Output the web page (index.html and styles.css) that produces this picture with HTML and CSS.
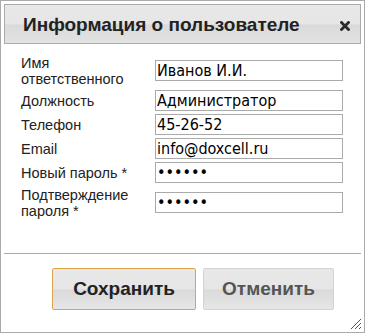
FILE: index.html
```html
<!DOCTYPE html>
<html lang="ru">
<head>
    <meta charset="UTF-8">
    <title>Информация о пользователе</title>
    <link rel="stylesheet" href="styles.css">
</head>
<body>
    <div class="dialog">
        <div class="dialog-titlebar">
            <span class="dialog-title">Информация о пользователе</span>
            <svg class="dialog-close" width="10" height="10" viewBox="0 0 10 10">
                <path d="M1.5 1.5 L8.5 8.5 M8.5 1.5 L1.5 8.5" stroke="#2b2b2b" stroke-width="2.8" stroke-linecap="square"/>
            </svg>
        </div>

        <div class="dialog-content">
            <form class="user-form">
                <label class="field-label" for="fio">Имя ответственного</label>
                <input class="field-input" id="fio" type="text" value="Иванов И.И.">

                <label class="field-label" for="post">Должность</label>
                <input class="field-input" id="post" type="text" value="Администратор">

                <label class="field-label" for="phone">Телефон</label>
                <input class="field-input" id="phone" type="text" value="45-26-52">

                <label class="field-label" for="email">Email</label>
                <input class="field-input" id="email" type="text" value="info@doxcell.ru">

                <label class="field-label" for="pass">Новый пароль *</label>
                <input class="field-input" id="pass" type="password" value="123456">

                <label class="field-label" for="pass2">Подтверждение пароля *</label>
                <input class="field-input" id="pass2" type="password" value="123456">
            </form>
        </div>

        <div class="dialog-buttonpane">
            <button class="dialog-button dialog-button-primary" type="button">Сохранить</button>
            <button class="dialog-button" type="button">Отменить</button>
        </div>

        <svg class="resize-handle" width="12" height="12" viewBox="0 0 12 12">
            <path d="M11 1 L1 11 M11 5 L5 11 M11 9 L9 11" stroke="#555" stroke-width="1"/>
        </svg>
    </div>
</body>
</html>
```

FILE: styles.css
```css
* {
    margin: 0;
    padding: 0;
    box-sizing: border-box;
}

body {
    background: #fff;
    font-family: 'Liberation Sans', Arial, sans-serif;
}

.dialog {
    position: relative;
    width: 365px;
    height: 333px;
    border: 1px solid #aaa;
    padding: 3px;
    display: flex;
    flex-direction: column;
    background: #fff;
}

.dialog-titlebar {
    height: 40px;
    border: 1px solid #aaa;
    background: linear-gradient(#e8e8e8 0%, #e6e6e6 50%, #dadada 52%, #e3e3e3 100%);
    display: flex;
    align-items: center;
    justify-content: space-between;
    padding: 0 11px 0 18px;
}

.dialog-title {
    font-size: 19px;
    font-weight: bold;
    color: #222;
    line-height: 38px;
    padding-top: 1px;
}

.dialog-close {
    display: block;
    margin-top: 4px;
    margin-right: -1px;
}

.dialog-content {
    flex: 1;
    padding: 10px 19px 0 17px;
}

.user-form {
    display: grid;
    grid-template-columns: 125px 188px;
    column-gap: 9px;
    row-gap: 3px;
    align-items: center;
}

.field-label {
    font-size: 14.5px;
    line-height: 16px;
    color: #222;
    padding-top: 1px;
}

.field-input {
    width: 188px;
    height: 21px;
    border: 1px solid #aaa;
    padding: 0 1px;
    font-family: 'DejaVu Sans Condensed', 'DejaVu Sans', sans-serif;
    font-stretch: condensed;
    font-size: 16px;
    color: #000;
    background: #fff;
    outline: none;
}

.dialog-buttonpane {
    height: 76px;
    border-top: 1px solid #aaa;
    display: flex;
    justify-content: flex-end;
    align-items: flex-start;
    gap: 7px;
    padding: 14px 27px 0 0;
}

.dialog-button {
    height: 42px;
    border: 1px solid #d3d3d3;
    border-radius: 2px;
    background: linear-gradient(#e8e8e8 0%, #e6e6e6 50%, #dadada 52%, #e6e6e6 100%);
    font-family: 'Liberation Sans', Arial, sans-serif;
    font-size: 19px;
    font-weight: bold;
    color: #555;
    width: 131px;
    cursor: pointer;
}

.dialog-button-primary {
    width: 144px;
    border-color: #dea349;
    color: #222;
}

.resize-handle {
    position: absolute;
    right: 2px;
    bottom: 2px;
}
```
